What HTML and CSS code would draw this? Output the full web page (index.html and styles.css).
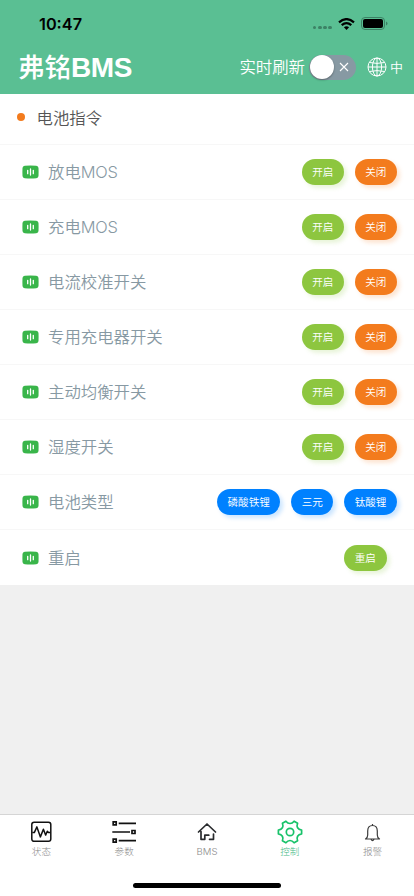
FILE: index.html
```html
<!DOCTYPE html>
<html lang="zh-CN">
<head>
<meta charset="utf-8">
<meta name="viewport" content="width=device-width, initial-scale=1">
<title>弗铭BMS</title>
<link rel="stylesheet" href="styles.css">
</head>
<body>
<svg class="defs" width="0" height="0" aria-hidden="true">
  <symbol id="cell" viewBox="0 0 17 14">
    <path fill="#39b54a" d="M2.700 .7Q8.500 .2 14.300 .7Q16.400 .9 16.500 3Q16.700 7 16.500 11Q16.400 13.100 14.300 13.300Q8.500 13.800 2.700 13.300Q.6 13.100 .5 11Q.3 7 .5 3Q.6 .9 2.700 .7Z"/>
    <path stroke="#fff" stroke-width="1.300" stroke-linecap="round" d="M5.700 5.300v3.400M8.500 4v6M11.300 5.300v3.400"/>
  </symbol>
</svg>
<div class="app">
  <header class="header">
    <div class="status">
      <span class="time">10:47</span>
      <div class="indicators">
        <span class="dots"><i></i><i></i><i></i><i></i></span>
        <svg class="wifi" width="17" height="12" viewBox="0 0 17 12" fill="none" stroke="#000" stroke-width="2.200">
          <path d="M1 4.400Q8.500-2.200 16 4.400M3.700 7.100Q8.500 3 13.300 7.100"/>
          <path fill="#000" stroke="none" d="M5.900 9.300Q8.500 7 11.100 9.300L8.500 12Z"/>
        </svg>
        <svg class="battery" width="27" height="13" viewBox="0 0 27 13">
          <rect x=".5" y=".5" width="23" height="12" rx="3.500" fill="none" stroke="#3c8265"/>
          <rect x="2" y="2" width="20" height="9" rx="2" fill="#000"/>
          <path d="M25 4.500q1.500.6 1.500 2t-1.500 2z" fill="#3c8265"/>
        </svg>
      </div>
    </div>
    <div class="titlebar">
      <h1>弗铭<b>BMS</b></h1>
      <span class="refresh">实时刷新</span>
      <span class="switch"><i class="knob"></i>
        <svg width="10" height="10" viewBox="0 0 10 10" stroke="#fff" stroke-width="1.100"><path d="M1 1l8 8M9 1l-8 8"/></svg>
      </span>
      <svg class="globe" width="20" height="20" viewBox="0 0 20 20" fill="none" stroke="#fff" stroke-width="1">
        <circle cx="10" cy="10" r="9"/><ellipse cx="10" cy="10" rx="4.600" ry="9"/>
        <path d="M10 1v18M1 10h18M2.500 5.500Q10 7.300 17.500 5.500M2.500 14.500Q10 12.700 17.500 14.500"/>
      </svg>
      <span class="lang">中</span>
    </div>
  </header>
  <main class="list">
    <div class="section"><i class="bullet"></i>电池指令</div>
    <div class="row"><svg class="cell"><use href="#cell"/></svg><span class="label">放电<span class="latin">MOS</span></span><button class="on">开启</button><button class="off">关闭</button></div>
    <div class="row"><svg class="cell"><use href="#cell"/></svg><span class="label">充电<span class="latin">MOS</span></span><button class="on">开启</button><button class="off">关闭</button></div>
    <div class="row"><svg class="cell"><use href="#cell"/></svg><span class="label">电流校准开关</span><button class="on">开启</button><button class="off">关闭</button></div>
    <div class="row"><svg class="cell"><use href="#cell"/></svg><span class="label">专用充电器开关</span><button class="on">开启</button><button class="off">关闭</button></div>
    <div class="row"><svg class="cell"><use href="#cell"/></svg><span class="label">主动均衡开关</span><button class="on">开启</button><button class="off">关闭</button></div>
    <div class="row"><svg class="cell"><use href="#cell"/></svg><span class="label">湿度开关</span><button class="on">开启</button><button class="off">关闭</button></div>
    <div class="row"><svg class="cell"><use href="#cell"/></svg><span class="label">电池类型</span><button class="type">磷酸铁锂</button><button class="type">三元</button><button class="type">钛酸锂</button></div>
    <div class="row restart"><svg class="cell"><use href="#cell"/></svg><span class="label">重启</span><button class="on">重启</button></div>
  </main>
  <nav class="tabs">
    <div class="tab">
      <svg width="26" height="26" viewBox="0 0 26 26" fill="none" stroke="#111" stroke-width="1.500" stroke-linejoin="round">
        <rect x="3.800" y="3.300" width="19" height="19" rx="2.300"/><path d="M4.300 13.600h2l2.600-5.700 3.500 10 3-7.600 2.200 5.800 1.700-3.800 1.200 1.300h1.800"/>
      </svg><span>状态</span>
    </div>
    <div class="tab">
      <svg width="26" height="26" viewBox="0 0 26 26" fill="none" stroke="#111" stroke-width="1.700">
        <path d="M2.200 2.900h3v3h-3zM21 11.500h3v3h-3zM2.200 20.100h3v3h-3zM7.700 4.400H25M1.300 13H19M7.700 21.600H25"/>
      </svg><span>参数</span>
    </div>
    <div class="tab">
      <svg width="26" height="26" viewBox="0 0 26 26" fill="none" stroke="#292b2e" stroke-width="1.700" stroke-linecap="round" stroke-linejoin="round">
        <path d="M4.500 13 13 5l8.500 8M7 12.500v7.800h3.800v-4.100h4M19.500 15v5.300h-4"/>
      </svg><span>BMS</span>
    </div>
    <div class="tab active">
      <svg width="26" height="26" viewBox="0 0 26 26" fill="none" stroke="#17c269" stroke-width="1.700" stroke-linejoin="round">
        <path d="M8.900 2.200q1.800 2.300 4.100 2.300t4.100-2.300l3.500 2q-1.100 2.700 0 4.600t4 2.300v3.800q-2.900.4-4 2.300t0 4.600l-3.500 2Q15.300 21.500 13 21.500t-4.100 2.300l-3.500-2q1.100-2.700 0-4.600t-4-2.300v-3.800q2.900-.4 4-2.300t0-4.600z"/><circle cx="13" cy="13" r="3.700"/>
      </svg><span>控制</span>
    </div>
    <div class="tab">
      <svg width="26" height="26" viewBox="0 0 26 26" fill="none" stroke="#3c3c3c" stroke-width="1.200" stroke-linejoin="round">
        <path d="M5.500 20q2.200-1.300 2.200-4v-3.900q0-5.600 4.800-5.600t4.800 5.600V16q0 2.700 2.200 4zM11 20.300q1.500 2.600 3 0M12.500 6.400V5"/>
      </svg><span>报警</span>
    </div>
  </nav>
  <div class="home"><i></i></div>
</div>
</body>
</html>
```
FILE: styles.css
```css
* { box-sizing: border-box; }
body { margin: 0; font-family: Inter, "Noto Sans CJK SC", sans-serif; background: #f0f0f0; }
.defs { display: block; }
.app { width: 414px; height: 896px; display: flex; flex-direction: column; overflow: hidden; }
.header { height: 94px; flex: none; background: #5abf93; color: #fff; }
.status { height: 44px; padding: 3px 26px 0 39px; display: flex; align-items: center; justify-content: space-between; }
.time { color: #000; font-size: 16.300px; font-weight: 600; line-height: 20px; }
.indicators { display: flex; align-items: center; }
.dots { display: flex; gap: 1.500px; margin: 8px 6px 0 0; }
.dots i { width: 3.700px; height: 3.700px; border-radius: 1.500px; background: #3c8265; }
.wifi { margin-right: 6px; }
.titlebar { height: 46px; display: flex; align-items: center; padding: 0 11px 0 18px; }
h1 { margin: 0 auto 0 0; font-size: 26.500px; font-weight: 500; line-height: 40px; }
h1 b { font-family: "Liberation Sans", Arial, sans-serif; font-size: 28px; font-weight: 700; letter-spacing: -.4px; }
.refresh { font-size: 16.400px; font-weight: 350; line-height: 24px; margin-right: 4px; }
.switch { width: 47px; height: 25px; border-radius: 13px; background: #8799a3; display: flex; align-items: center; justify-content: space-between; padding: 0 7px 0 1px; margin-right: 11px; }
.knob { width: 24px; height: 24px; border-radius: 50%; background: #fff; box-shadow: 0 1px 2px rgba(0,0,0,.35); }
.globe { margin-right: 3px; }
.lang { font-size: 13px; font-weight: 350; line-height: 20px; }
.list { flex: none; height: 491.400px; background: #fff; }
.section { height: 50.500px; display: flex; align-items: center; padding: 0 0 4px 16.500px; font-size: 16.400px; font-weight: 350; color: #555; border-bottom: 1px solid #f7f7f7; }
.bullet { width: 8px; height: 8px; border-radius: 50%; background: #f37b1d; margin-right: 12px; }
.row { height: 55.110px; display: flex; align-items: center; padding: 0 17px 0 21.500px; border-bottom: 1px solid #f7f7f7; }
.row:last-child { border-bottom: 0; }
.restart { padding-right: 27.500px; }
.cell { width: 17px; height: 14px; margin-right: 9.500px; }
.label { flex: 1; font-size: 16.400px; font-weight: 350; line-height: 24px; color: #8799a3; }
.latin { font-family: Inter, sans-serif; letter-spacing: -.2px; }
button { height: 26px; margin: 0 0 0 10.600px; padding: 0 10.600px 1px; border: 0; border-radius: 13px; font: 350 10.600px/25px "Noto Sans CJK SC", sans-serif; color: #fff; }
.on { background: #8dc63f; box-shadow: 3px 3px 4px rgba(141,198,63,.2); }
.off { background: #f37b1d; box-shadow: 3px 3px 4px rgba(243,123,29,.2); }
.type { background: #0081ff; box-shadow: 3px 3px 4px rgba(0,129,255,.2); }
.tabs { margin-top: auto; height: 48px; flex: none; display: flex; background: #fff; border-top: 1px solid #d5d5d5; }
.tab { flex: 1; display: flex; flex-direction: column; align-items: center; padding-top: 4px; font-size: 9.600px; line-height: 13px; color: #8a8a8a; font-weight: 300; }
.tab svg { display: block; flex: none; }
.active { color: #45b985; }
.home { height: 34px; flex: none; background: #fff; display: flex; align-items: flex-end; justify-content: center; padding-bottom: 8px; }
.home i { width: 148px; height: 5px; border-radius: 3px; background: #000; }
```
